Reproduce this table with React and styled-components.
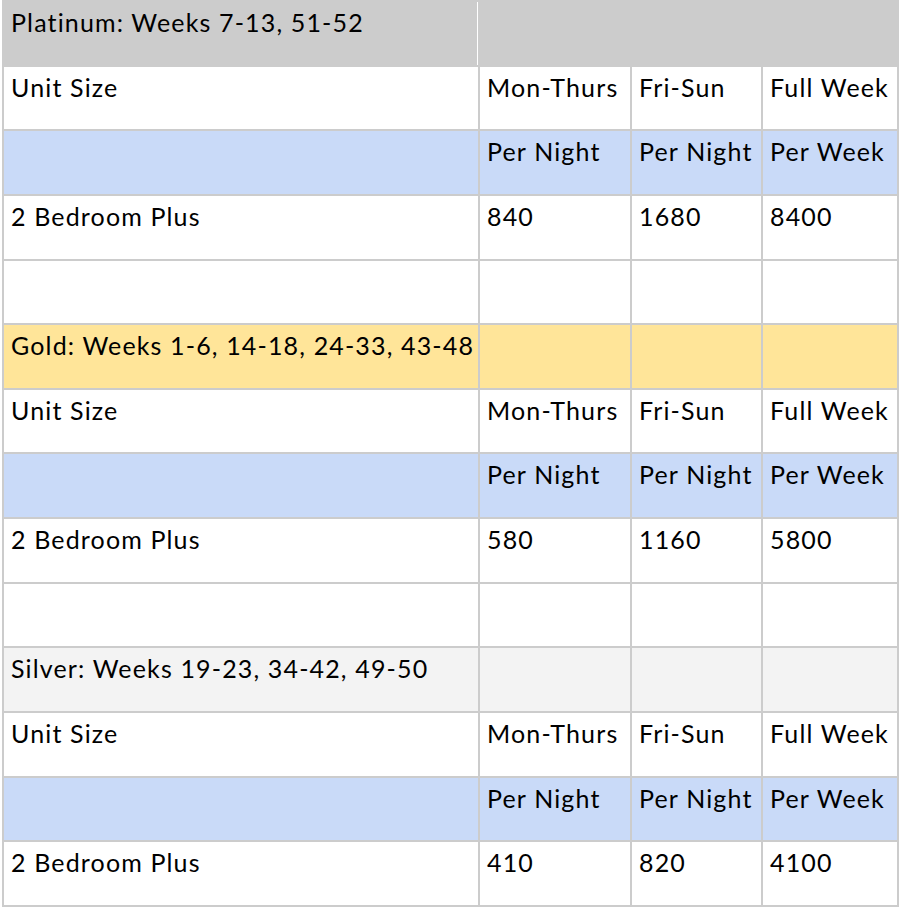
import React from "react";
import styled, { createGlobalStyle } from "styled-components";

const GlobalStyle = createGlobalStyle`
	html, body {
		margin: 0;
		padding: 0;
		background: #ffffff;
	}
	body {
		font-family: Lato, "Liberation Sans", sans-serif;
		color: #000000;
	}
`;

const lineColor = "#cccccc";

const fills = {
	platinum: "#cccccc",
	gold: "#ffe599",
	silver: "#f3f3f3",
	blue: "#c9daf8",
	plain: "#ffffff",
};

const Grid = styled.div`
	display: grid;
	grid-template-columns: 476px 152px 131px 136px;
	grid-auto-rows: 64.64px;
	width: max-content;
	margin-left: 2px;
	border-left: 2px solid ${lineColor};
	border-top: 2px solid ${lineColor};
`;

const Cell = styled.div`
	box-sizing: border-box;
	grid-column: span ${props => props.$span || 1};
	background: ${props => fills[props.$fill || "plain"]};
	border-right: 2px solid ${lineColor};
	border-bottom: 2px solid ${lineColor};
	padding: 5px 0 0 7px;
	font-size: 25px;
	letter-spacing: 1.15px;
	line-height: 1.2;
	white-space: nowrap;
	overflow: hidden;
	box-shadow: ${props => props.$seam ? "inset -1px 0 0 #ffffff" : "none"};
`;

const seasons = [
	{ title: "Platinum: Weeks 7-13, 51-52", fill: "platinum", merged: true, prices: ["840", "1680", "8400"] },
	{ title: "Gold: Weeks 1-6, 14-18, 24-33, 43-48", fill: "gold", prices: ["580", "1160", "5800"] },
	{ title: "Silver: Weeks 19-23, 34-42, 49-50", fill: "silver", prices: ["410", "820", "4100"], last: true },
];

const Season = ({ season }) => {
	return <>
		{season.merged ? <>
			<Cell $fill={season.fill} $seam>{season.title}</Cell>
			<Cell $fill={season.fill} $span={3} />
		</> : <>
			<Cell $fill={season.fill}>{season.title}</Cell>
			<Cell $fill={season.fill} />
			<Cell $fill={season.fill} />
			<Cell $fill={season.fill} />
		</>}

		<Cell>Unit Size</Cell>
		<Cell>Mon-Thurs</Cell>
		<Cell>Fri-Sun</Cell>
		<Cell>Full Week</Cell>

		<Cell $fill="blue" />
		<Cell $fill="blue">Per Night</Cell>
		<Cell $fill="blue">Per Night</Cell>
		<Cell $fill="blue">Per Week</Cell>

		<Cell>2 Bedroom Plus</Cell>
		{season.prices.map((price, i) => <Cell key={i}>{price}</Cell>)}

		{!season.last && <>
			<Cell />
			<Cell />
			<Cell />
			<Cell />
		</>}
	</>
};

const App = () => {
	return <>
		<GlobalStyle />
		<Grid>
			{seasons.map(season => <Season key={season.fill} season={season} />)}
		</Grid>
	</>
};

export default App;
